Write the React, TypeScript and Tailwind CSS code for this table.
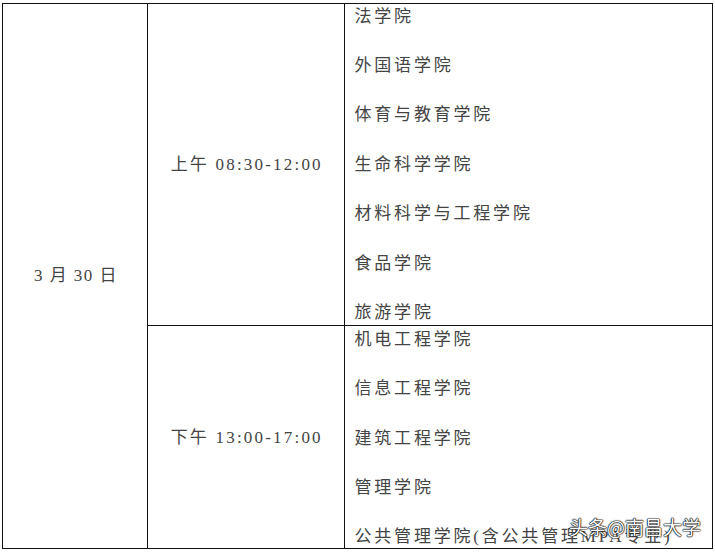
import { FC } from 'react';

const morning = ['法学院', '外国语学院', '体育与教育学院', '生命科学学院', '材料科学与工程学院', '食品学院', '旅游学院'];
const afternoon = ['机电工程学院', '信息工程学院', '建筑工程学院', '管理学院', '公共管理学院(含公共管理MPA专业)'];

const App: FC = () => {
  return (
    <div
      className="w-[715px] h-[553px] bg-white overflow-hidden relative pl-[2px] pt-[3px] text-[#444]"
      style={{ fontFamily: '"Liberation Serif", "Noto Sans CJK SC", serif' }}
    >
      <div className="w-[710.5px] border-[1.5px] border-[#111] grid grid-cols-[145px_196.5px_1fr] grid-rows-[322px_221.5px]">
        {/* 日期 */}
        <div className="row-span-2 border-r-[1.5px] border-[#111] flex items-center justify-center text-[17px] tracking-[1.5px] leading-[20px] pl-[2px] pt-[1px]">
          3 月 30 日
        </div>

        {/* 上午 */}
        <div className="border-r-[1.5px] border-b-[1.5px] border-[#111] flex items-center justify-center text-[17px] tracking-[2.2px] leading-[20px] pl-[2px]">
          上午 08:30-12:00
        </div>
        <div className="border-b-[1.5px] border-[#111] flex flex-col justify-between pl-[10px] pt-[2.5px] pb-[2px] text-[17px] tracking-[2.8px] leading-[20px]">
          {morning.map((name, i) => (
            <div key={i}>{name}</div>
          ))}
        </div>

        {/* 下午 */}
        <div className="border-r-[1.5px] border-[#111] flex items-center justify-center text-[17px] tracking-[2.2px] leading-[20px] pl-[2px] pt-[3px]">
          下午 13:00-17:00
        </div>
        <div className="flex flex-col justify-between pl-[10px] pt-[4px] pb-[0.5px] text-[17px] tracking-[2.8px] leading-[20px] whitespace-nowrap">
          {afternoon.map((name, i) => (
            <div key={i}>{name}</div>
          ))}
        </div>
      </div>

      {/* 水印 */}
      <div
        className="absolute left-[569px] top-[515px] text-[19px] leading-[24px] text-white whitespace-nowrap [text-shadow:0_0_1px_#000,0_0_1px_#000,0_0_1px_#000,0_0_2px_#222]"
        style={{ fontFamily: '"Noto Sans CJK SC", sans-serif' }}
      >
        头条@南昌大学
      </div>
    </div>
  );
};

export default App;
